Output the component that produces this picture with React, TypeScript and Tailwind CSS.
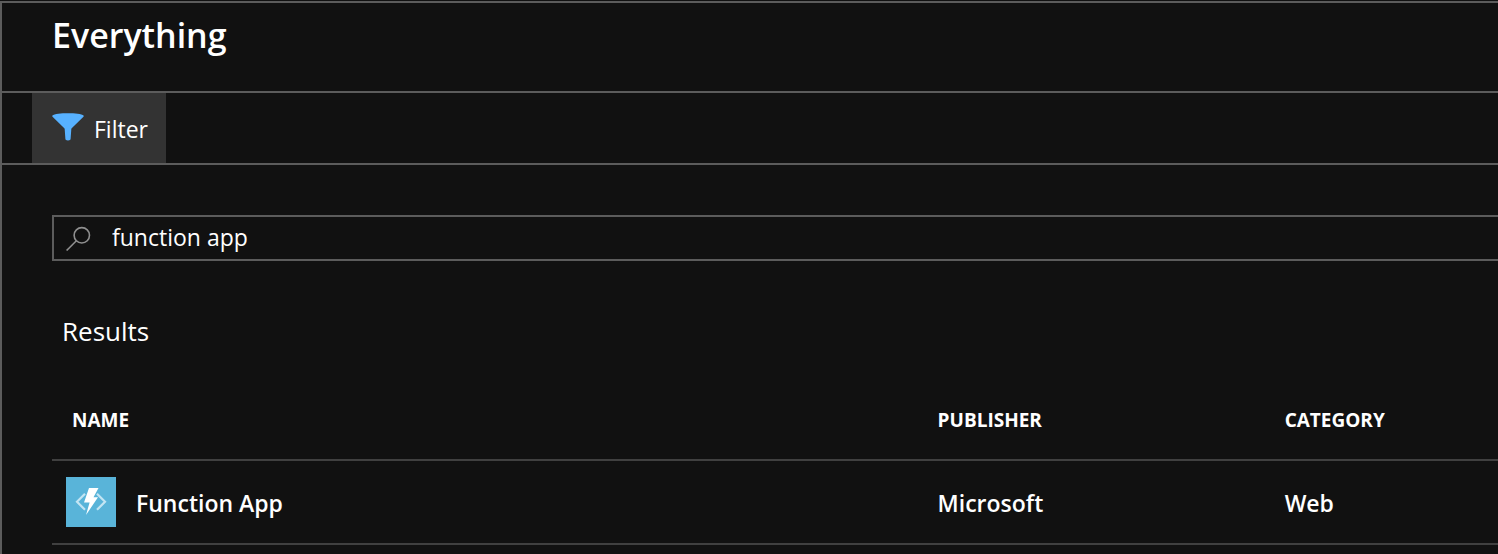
import { useState } from "react";

const rows = [{ name: "Function App", publisher: "Microsoft", category: "Web" }];

function FilterIcon() {
  return (
    <svg width="32" height="28" viewBox="0 0 32 28" aria-hidden="true" className="shrink-0">
      <path
        d="M0.2 2.8C2.5 0.9 9 0.3 16 0.3s13.500.6 15.800 2.500c0 .5-.2.9-.6 1.300L19.700 15.200c-.3.3-.4.6-.4 1l-.7 9.800c0 .8-.8 1.400-2.600 1.400s-2.600-.6-2.600-1.400l-.7-9.800c0-.4-.1-.7-.4-1L.8 4.100C.4 3.700.2 3.300.2 2.800z"
        fill="#57b1ff"
      />
    </svg>
  );
}

function SearchIcon() {
  return (
    <svg width="26" height="26" viewBox="0 0 26 26" fill="none" stroke="#8f8f8f" strokeWidth="1.600" aria-hidden="true" className="shrink-0">
      <circle cx="15.800" cy="10.300" r="7.700" />
      <path d="M10.400 15.800L0.600 25.500" />
    </svg>
  );
}

function FunctionIcon() {
  return (
    <svg width="50" height="50" viewBox="0 0 50 50" aria-hidden="true" className="shrink-0">
      <path d="M0 0h50v50H0z" fill="#59b4d9" />
      <path d="M19 16.800L11 24.800l8 8M31 16.800L39 24.800l-8 8" fill="none" stroke="#c3e5f3" strokeWidth="2.200" />
      <path d="M23 11h9.500l-5 9.300H32L20 38l3.600-12.500H18z" fill="#fff" />
    </svg>
  );
}

export default function App() {
  const [query, setQuery] = useState("function app");

  return (
    <div className="min-h-screen bg-[#111111] pt-px font-['Open_Sans','Noto_Sans',sans-serif] text-white">
      <main className="min-h-[calc(100vh-1px)] border-t-2 border-l-2 border-[#5c5c5c]">
        <header className="border-b-2 border-[#5c5c5c] px-[50px] pt-2 pb-8">
          <h1 className="text-[34px] leading-[48px] font-semibold">Everything</h1>
        </header>

        <div className="flex border-b-2 border-[#5c5c5c] pl-[30px]">
          <button type="button" className="flex h-[70px] items-center gap-2.5 bg-[#333333] pr-[18px] pb-0.5 pl-5 text-[23px]">
            <FilterIcon />
            <span className="pt-1">Filter</span>
          </button>
        </div>

        <div className="pt-[50px] pl-[50px]">
          <label className="flex h-[46px] items-center gap-5 border-2 border-r-0 border-[#5c5c5c] pl-3">
            <SearchIcon />
            <input
              type="text"
              aria-label="Search everything"
              value={query}
              onChange={(e) => setQuery(e.target.value)}
              className="min-w-0 flex-1 bg-transparent pb-0.5 text-[23px] leading-8 outline-none"
            />
          </label>

          <h2 className="mt-[50px] pl-2.5 text-[26px] leading-[40px]">Results</h2>

          <table className="mt-[27px] w-full table-fixed border-collapse text-left">
            <thead>
              <tr className="h-[82px] border-b-2 border-[#404040] text-[19px] font-bold">
                <th scope="col" className="w-[60%] pt-1 pl-5">NAME</th>
                <th scope="col" className="w-[24%] pt-1 pl-[18px]">PUBLISHER</th>
                <th scope="col" className="w-[16%] pt-1 pl-[18px]">CATEGORY</th>
              </tr>
            </thead>
            <tbody>
              {rows.map((row) => (
                <tr key={row.name} className="h-[84px] border-b-2 border-[#404040] text-[23px] font-semibold">
                  <td className="pl-3.5">
                    <a href="#function-app" className="flex items-center gap-5">
                      <FunctionIcon />
                      <span className="pt-0.5">{row.name}</span>
                    </a>
                  </td>
                  <td className="pt-0.5 pl-[18px]">{row.publisher}</td>
                  <td className="pt-0.5 pl-[18px]">{row.category}</td>
                </tr>
              ))}
            </tbody>
          </table>
        </div>
      </main>
    </div>
  );
}
